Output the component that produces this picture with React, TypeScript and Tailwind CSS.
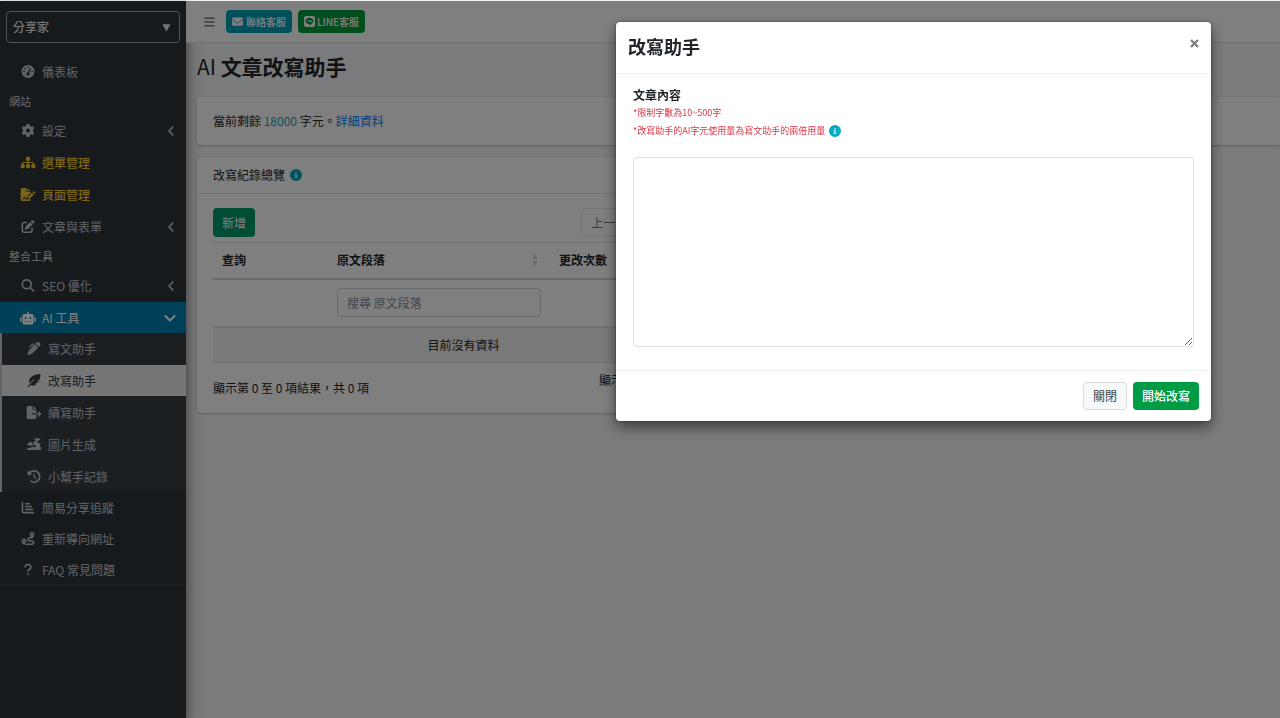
import type { ReactNode } from "react";
import type { IconType } from "react-icons";
import {
  FaGaugeHigh, FaGear, FaSitemap, FaFileSignature, FaPenToSquare, FaMagnifyingGlass, FaRobot,
  FaPenClip, FaFeatherPointed, FaFileExport, FaClockRotateLeft, FaRoute, FaQuestion,
  FaBars, FaEnvelope, FaLine, FaCircleInfo,
} from "react-icons/fa6";

type IconProps = { className?: string };

type NavEntry = {
  name: string;
  icon: IconType | ((props: IconProps) => ReactNode);
  arrow?: boolean;
  highlight?: boolean;
  active?: boolean;
};

function LandscapeIcon({ className }: IconProps) {
  return (
    <svg viewBox="0 0 16 14" className={`fill-current ${className}`}>
      <path d="M8 1.2C9 .2 11 .1 13 .4l2 .6-.6 1.3-1.6.4c-1.600.3-1.700.9-.8 1.600l2.200 1.800c1.100 1 .8 2-.2 2.700l1.200.9c.7.8.8 2.500-.2 3.300H1c-1 0-1.300-1-.5-1.500l3-1.300c1.500-.6 3.500-.7 5.500-.5 1.700.1 1.800-.7.700-1.400L8 7.300C6.800 6.300 7 5 8.300 4L10 2.800z" />
      <path d="M0 7.200C1.500 6.600 2 4.600 4 4.300c1.500-.2 2.500.8 2.500 2 0 1 .4 1.500 1 2C5 8.200 2.500 8.200 0 7.200z" />
    </svg>
  );
}

function BarsChartIcon({ className }: IconProps) {
  return (
    <svg viewBox="0 0 14 14" className={`fill-none stroke-current ${className}`} strokeWidth="1.7" strokeLinecap="round">
      <path d="M1 1.500v9.800c0 .7.400 1.200 1.200 1.200H13M4.500 3h4M4.500 6h6M4.500 9h7.500" />
    </svg>
  );
}

function Chevron({ className }: IconProps) {
  return (
    <svg viewBox="0 0 10 10" className={`fill-none stroke-current ${className}`} strokeWidth="1.7" strokeLinecap="round" strokeLinejoin="round">
      <path d="M6.700 1.200 3 5l3.700 3.800" />
    </svg>
  );
}

const siteLinks: NavEntry[] = [
  { name: "設定", icon: FaGear, arrow: true },
  { name: "選單管理", icon: FaSitemap, highlight: true },
  { name: "頁面管理", icon: FaFileSignature, highlight: true },
  { name: "文章與表單", icon: FaPenToSquare, arrow: true },
];

const aiLinks: NavEntry[] = [
  { name: "寫文助手", icon: FaPenClip },
  { name: "改寫助手", icon: FaFeatherPointed, active: true },
  { name: "續寫助手", icon: FaFileExport },
  { name: "圖片生成", icon: LandscapeIcon },
  { name: "小幫手記錄", icon: FaClockRotateLeft },
];

const otherLinks: NavEntry[] = [
  { name: "簡易分享追蹤", icon: BarsChartIcon },
  { name: "重新導向網址", icon: FaRoute },
  { name: "FAQ 常見問題", icon: FaQuestion },
];

function NavItem({ item }: { item: NavEntry }) {
  const Icon = item.icon;
  return (
    <li>
      <a
        href="#"
        className={`flex h-[31px] items-center pl-5 pr-[10px] ${item.highlight ? "font-medium text-[#f5c92e]" : "text-[#c2c7d0]"}`}
      >
        <Icon className="mr-[6px] h-[13px] w-4" />
        <span className="flex-1">{item.name}</span>
        {item.arrow && <Chevron className="h-[10px] w-[10px]" />}
      </a>
    </li>
  );
}

function NavHeader({ children }: { children: ReactNode }) {
  return <li className="flex h-[26px] items-center pl-[9px] text-[11px] text-[#d0d4db]">{children}</li>;
}

function Sidebar() {
  return (
    <aside className="flex w-[186px] shrink-0 flex-col bg-[#2d353a] shadow-[0_8px_16px_rgba(0,0,0,0.35),0_4px_10px_rgba(0,0,0,0.3)]">
      <div className="px-[6px] pt-[10px]">
        <button
          type="button"
          className="flex h-8 w-full items-center justify-between rounded border border-[#a0a4a8] pl-[6px] pr-2 font-medium text-[#e8eaed]"
        >
          分享家
          <svg viewBox="0 0 10 10" className="h-[9px] w-[9px] fill-current">
            <path d="M0.500 1.500h9L5 9.500z" />
          </svg>
        </button>
      </div>
      <nav className="pt-[13px]">
        <ul className="flex flex-col gap-px">
          <NavItem item={{ name: "儀表板", icon: FaGaugeHigh }} />
          <NavHeader>網站</NavHeader>
          {siteLinks.map((item) => (
            <NavItem key={item.name} item={item} />
          ))}
          <NavHeader>整合工具</NavHeader>
          <NavItem item={{ name: "SEO 優化", icon: FaMagnifyingGlass, arrow: true }} />
          <li>
            <a href="#" className="flex h-[31px] items-center bg-[#0081b0] pl-5 pr-[10px] text-white">
              <FaRobot className="mr-[6px] h-[14px] w-4" />
              <span className="flex-1">AI 工具</span>
              <Chevron className="h-3 w-3 -rotate-90" />
            </a>
            <ul className="flex flex-col gap-px border-l-2 border-[#c2c7d0] bg-[#383f45]">
              {aiLinks.map(({ name, icon: Icon, active }) => (
                <li key={name}>
                  <a
                    href="#"
                    className={`flex h-[31px] items-center pl-6 ${active ? "bg-[#ececec] text-[#343a40]" : "text-[#c2c7d0]"}`}
                  >
                    <Icon className="mr-[6px] h-[13px] w-4" />
                    {name}
                  </a>
                </li>
              ))}
            </ul>
          </li>
        </ul>
        <ul className="border-b border-[#3d454b]">
          {otherLinks.map((item) => (
            <NavItem key={item.name} item={item} />
          ))}
        </ul>
      </nav>
    </aside>
  );
}

function RecordsCard() {
  return (
    <section className="mt-3 w-[533px] rounded bg-white shadow-[0_0_1px_rgba(0,0,0,0.13),0_1px_3px_rgba(0,0,0,0.2)]">
      <h2 className="flex h-[37px] items-center gap-[5px] border-b border-[#e4e4e4] px-4">
        改寫紀錄總覽
        <FaCircleInfo className="h-3 w-3 text-[#00a9c4]" />
      </h2>
      <div className="px-4 pb-4 pt-[14px]">
        <div className="flex justify-between">
          <button type="button" className="h-[29px] rounded-sm bg-[#009a6a] px-[9px] text-white">
            新增
          </button>
          <div className="flex text-[#6c757d]">
            <button type="button" className="h-[29px] rounded-l-sm border border-[#e4e6e9] px-[9px]">上一頁</button>
            <button type="button" className="h-[29px] border-y border-[#e4e6e9] px-[7px]">1</button>
            <button type="button" className="h-[29px] rounded-r-sm border border-[#e4e6e9] px-[9px]">下一頁</button>
          </div>
        </div>
        <table className="mt-[5px] w-full table-fixed border-collapse">
          <colgroup>
            <col className="w-[115px]" />
            <col className="w-[222px]" />
            <col />
          </colgroup>
          <thead>
            <tr className="h-9 border-b-2 border-t border-b-[#ced2d6] border-t-[#dee2e6] text-left">
              <th className="px-[9px]">查詢</th>
              <th className="pl-[9px] pr-3">
                <div className="flex items-center justify-between">
                  原文段落
                  <svg viewBox="0 0 6 14" className="h-[14px] w-[6px] fill-[#d4d4d4]">
                    <path d="M3 0.500 5.700 6H0.300zM3 13.500 0.300 8h5.400z" />
                  </svg>
                </div>
              </th>
              <th className="px-[9px]">更改次數</th>
            </tr>
          </thead>
          <tbody>
            <tr className="h-12">
              <td />
              <td className="px-[9px]">
                <input
                  type="text"
                  aria-label="搜尋 原文段落"
                  placeholder="搜尋 原文段落"
                  className="h-[29px] w-full rounded-sm border border-[#ced4da] px-[9px] placeholder:text-[#868e96]"
                />
              </td>
              <td />
            </tr>
            <tr className="h-9 border-b border-t-2 border-[#dee2e6] bg-[#f2f2f2]">
              <td colSpan={3} className="text-center">目前沒有資料</td>
            </tr>
          </tbody>
        </table>
        <div className="flex justify-between pt-2">
          <p className="pt-2">顯示第 0 至 0 項結果，共 0 項</p>
          <p className="w-[115px]">顯示 10 項結果</p>
        </div>
      </div>
    </section>
  );
}

function RewriteDialog() {
  return (
    <div className="fixed inset-x-0 bottom-0 top-px flex items-start justify-end bg-black/50 pr-[69px] pt-[21px]">
      <div
        role="dialog"
        aria-labelledby="dialog-title"
        className="w-[595px] rounded-sm bg-white shadow-[0_6px_14px_rgba(0,0,0,0.5),0_0_2px_rgba(0,0,0,0.6)]"
      >
        <header className="flex h-[52px] items-start justify-between border-b border-[#eef0f2] px-3">
          <h2 id="dialog-title" className="pt-[11px] text-[18px] leading-[27px] font-semibold">改寫助手</h2>
          <button type="button" aria-label="關閉視窗" className="mt-[17px] text-[#7f7f7f]">
            <svg viewBox="0 0 9 9" className="h-[9px] w-[9px] stroke-current" strokeWidth="2.4">
              <path d="M1 1l7 7M8 1L1 8" />
            </svg>
          </button>
        </header>
        <div className="px-[17px] pb-[23px] pt-[11px]">
          <label htmlFor="article" className="block leading-[19px] font-bold">文章內容</label>
          <p className="text-[9px] leading-[18px] text-[#dc3545]">*限制字數為10~500字</p>
          <p className="flex items-center gap-1 text-[9px] leading-[18px] text-[#dc3545]">
            *改寫助手的AI字元使用量為寫文助手的兩倍用量
            <FaCircleInfo className="h-3 w-3 text-[#00a9c4]" />
          </p>
          <textarea
            id="article"
            className="mt-[17px] block h-[190px] w-full resize rounded-sm border border-[#dcdfe2] p-2"
          />
        </div>
        <footer className="flex justify-end gap-[6px] border-t border-[#eef0f2] px-3 py-[11px]">
          <button type="button" className="h-7 rounded-sm border border-[#dddddd] bg-[#f8f9fa] px-[9px] text-[#444444]">
            關閉
          </button>
          <button type="button" className="h-7 rounded-sm bg-[#009c45] px-[9px] font-medium text-white">
            開始改寫
          </button>
        </footer>
      </div>
    </div>
  );
}

export default function App() {
  return (
    <div className="flex min-h-screen bg-[#f4f6f9] pt-px font-['Noto_Sans_CJK_TC',sans-serif] text-[12px] leading-[18px] text-[#212529]">
      <Sidebar />
      <div className="min-w-0 flex-1">
        <header className="flex h-[42px] items-center border-b border-[#dee2e6] bg-white pl-[18px] text-[10px] font-medium text-white">
          <button type="button" aria-label="選單" className="mr-[11px] text-[#777777]">
            <FaBars className="h-3 w-[11px]" />
          </button>
          <a href="#" className="mr-[6px] flex h-[23px] items-center gap-[3px] rounded-sm bg-[#00a0b8] px-[6px]">
            <FaEnvelope className="h-[11px] w-[11px]" />
            聯絡客服
          </a>
          <a href="#" className="flex h-[23px] items-center gap-[2px] rounded-sm bg-[#009c3b] px-[6px]">
            <FaLine className="h-[11px] w-[11px]" />
            LINE客服
          </a>
        </header>
        <main className="pl-[11px]">
          <h1 className="pb-[15px] pt-[7px] text-[21px] leading-8">
            AI <span className="font-semibold">文章改寫助手</span>
          </h1>
          <section className="rounded-l bg-white px-4 py-[15px] shadow-[0_0_1px_rgba(0,0,0,0.13),0_1px_3px_rgba(0,0,0,0.2)]">
            當前剩餘 <span className="text-[#17a2b8]">18000</span> 字元。
            <a href="#" className="text-[#007bff]">詳細資料</a>
          </section>
          <RecordsCard />
        </main>
      </div>
      <RewriteDialog />
    </div>
  );
}
